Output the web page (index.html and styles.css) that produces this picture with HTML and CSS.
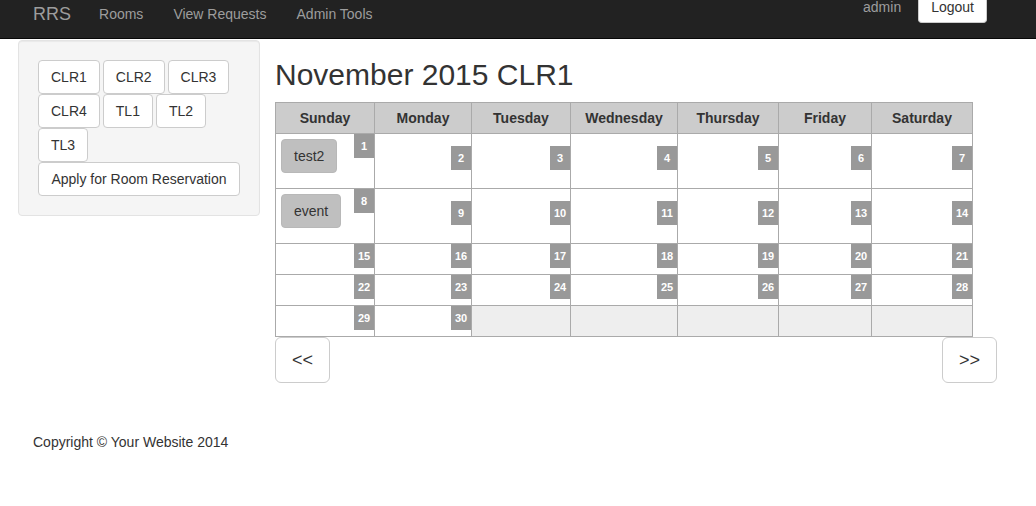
FILE: index.html
```html
<!DOCTYPE html>
<html>
<head>
<meta charset="utf-8">
<title>RRS</title>
<link rel="stylesheet" href="styles.css">
</head>
<body>
<nav class="navbar">
  <a class="brand" href="#">RRS</a>
  <ul class="nav">
    <li><a href="#">Rooms</a></li>
    <li><a href="#">View Requests</a></li>
    <li><a href="#">Admin Tools</a></li>
  </ul>
  <div class="nav-right">
    <span class="user">admin</span>
    <button class="btn-logout">Logout</button>
  </div>
</nav>

<div class="page">
  <aside class="well">
    <div class="room-list">
      <button class="btn">CLR1</button>
      <button class="btn">CLR2</button>
      <button class="btn">CLR3</button>
      <button class="btn">CLR4</button>
      <button class="btn">TL1</button>
      <button class="btn">TL2</button>
      <button class="btn">TL3</button>
    </div>
    <button class="btn btn-block">Apply for Room Reservation</button>
  </aside>

  <main class="main">
    <h2 class="title">November 2015 CLR1</h2>
    <table class="cal">
      <colgroup>
        <col class="c1"><col class="c2"><col class="c3"><col class="c4"><col class="c5"><col class="c6"><col class="c7">
      </colgroup>
      <thead>
        <tr>
          <th>Sunday</th><th>Monday</th><th>Tuesday</th><th>Wednesday</th><th>Thursday</th><th>Friday</th><th>Saturday</th>
        </tr>
      </thead>
      <tbody>
        <tr class="tall">
          <td><span class="day">1</span><button class="event">test2</button></td>
          <td><span class="day low">2</span></td>
          <td><span class="day low">3</span></td>
          <td><span class="day low">4</span></td>
          <td><span class="day low">5</span></td>
          <td><span class="day low">6</span></td>
          <td><span class="day low">7</span></td>
        </tr>
        <tr class="tall">
          <td><span class="day">8</span><button class="event">event</button></td>
          <td><span class="day low">9</span></td>
          <td><span class="day low">10</span></td>
          <td><span class="day low">11</span></td>
          <td><span class="day low">12</span></td>
          <td><span class="day low">13</span></td>
          <td><span class="day low">14</span></td>
        </tr>
        <tr class="short">
          <td><span class="day">15</span></td>
          <td><span class="day">16</span></td>
          <td><span class="day">17</span></td>
          <td><span class="day">18</span></td>
          <td><span class="day">19</span></td>
          <td><span class="day">20</span></td>
          <td><span class="day">21</span></td>
        </tr>
        <tr class="short">
          <td><span class="day">22</span></td>
          <td><span class="day">23</span></td>
          <td><span class="day">24</span></td>
          <td><span class="day">25</span></td>
          <td><span class="day">26</span></td>
          <td><span class="day">27</span></td>
          <td><span class="day">28</span></td>
        </tr>
        <tr class="short">
          <td><span class="day">29</span></td>
          <td><span class="day">30</span></td>
          <td class="empty"></td>
          <td class="empty"></td>
          <td class="empty"></td>
          <td class="empty"></td>
          <td class="empty"></td>
        </tr>
      </tbody>
    </table>
    <div class="pager">
      <button class="btn btn-lg">&lt;&lt;</button>
      <button class="btn btn-lg">&gt;&gt;</button>
    </div>
  </main>
</div>

<footer class="footer">
  <p>Copyright &copy; Your Website 2014</p>
</footer>
</body>
</html>
```

FILE: styles.css
```css
* {
  box-sizing: border-box;
}

html, body {
  margin: 0;
  padding: 0;
}

body {
  font-family: "Liberation Sans", Arial, Helvetica, sans-serif;
  font-size: 14px;
  line-height: 20px;
  color: #333;
  background: #fff;
}

/* ---------- navbar ---------- */
.navbar {
  height: 39px;
  background: #222;
  border-bottom: 1px solid #080808;
  display: flex;
  align-items: flex-start;
}

.brand {
  display: block;
  padding: 4px 13px 0 33px;
  font-size: 18px;
  line-height: 20px;
  color: #9d9d9d;
  text-decoration: none;
}

.nav {
  display: flex;
  list-style: none;
  margin: 0;
  padding: 0;
}

.nav a {
  display: block;
  padding: 4px 15px 0;
  line-height: 20px;
  color: #9d9d9d;
  text-decoration: none;
}

.nav-right {
  margin-left: auto;
  margin-right: 49px;
  display: flex;
  align-items: flex-start;
}

.user {
  display: block;
  padding-top: 0;
  margin-right: 17px;
  color: #9d9d9d;
  line-height: 14px;
}

.btn-logout {
  display: block;
  height: 23px;
  padding: 0 12px 8px;
  font-family: inherit;
  font-size: 14px;
  line-height: 14px;
  color: #333;
  background: #fff;
  border: 1px solid #ccc;
  border-top: none;
  border-radius: 0 0 4px 4px;
}

/* ---------- buttons ---------- */
.btn {
  display: inline-block;
  padding: 6px 12px;
  font-family: inherit;
  font-size: 14px;
  line-height: 20px;
  color: #333;
  background: #fff;
  border: 1px solid #ccc;
  border-radius: 4px;
  cursor: pointer;
  white-space: nowrap;
}

.btn-block {
  display: block;
  width: 100%;
}

.btn-lg {
  padding: 10px 16px;
  font-size: 18px;
  line-height: 24px;
  border-radius: 6px;
}

/* ---------- layout ---------- */
.page {
  display: flex;
  align-items: flex-start;
  padding-top: 1px;
}

.well {
  width: 242px;
  margin-left: 18px;
  padding: 19px;
  background: #f5f5f5;
  border: 1px solid #e3e3e3;
  border-radius: 4px;
  box-shadow: inset 0 1px 1px rgba(0, 0, 0, 0.05);
}

.room-list {
  display: flex;
  flex-wrap: wrap;
  column-gap: 3px;
}

.main {
  width: 722px;
  margin-left: 15px;
}

.title {
  margin: 18px 0 11px 0;
  font-size: 30px;
  line-height: 33px;
  font-weight: 500;
  color: #333;
}

/* ---------- calendar ---------- */
.cal {
  border-collapse: collapse;
  table-layout: fixed;
  width: 698px;
}

.c1 { width: 99px; }
.c2 { width: 97px; }
.c3 { width: 99px; }
.c4 { width: 107px; }
.c5 { width: 101px; }
.c6 { width: 93px; }
.c7 { width: 101px; }

.cal th,
.cal td {
  border: 1px solid #aaa;
  padding: 0;
}

.cal th {
  background: #ccc;
  font-weight: bold;
  text-align: center;
  height: 30px;
  padding: 5px 0 5px;
  vertical-align: top;
}

.cal td {
  vertical-align: top;
}

.tall td {
  height: 55px;
}

.short td {
  height: 31px;
}

.cal td.empty {
  background: #eee;
}

.day {
  float: right;
  width: 20px;
  height: 24px;
  line-height: 24px;
  background: #999;
  color: #fff;
  font-size: 11px;
  font-weight: bold;
  text-align: center;
}

.day.low {
  margin-top: 12px;
}

.event {
  display: block;
  margin: 5px 0 0 5px;
  padding: 6px 12px;
  font-family: inherit;
  font-size: 14px;
  line-height: 20px;
  color: #333;
  background: #bfbfbf;
  border: 1px solid #b8b8b8;
  border-radius: 4px;
}

.pager {
  display: flex;
  justify-content: space-between;
}

/* ---------- footer ---------- */
.footer {
  padding: 49px 0 0 33px;
}

.footer p {
  margin: 0;
}
```
